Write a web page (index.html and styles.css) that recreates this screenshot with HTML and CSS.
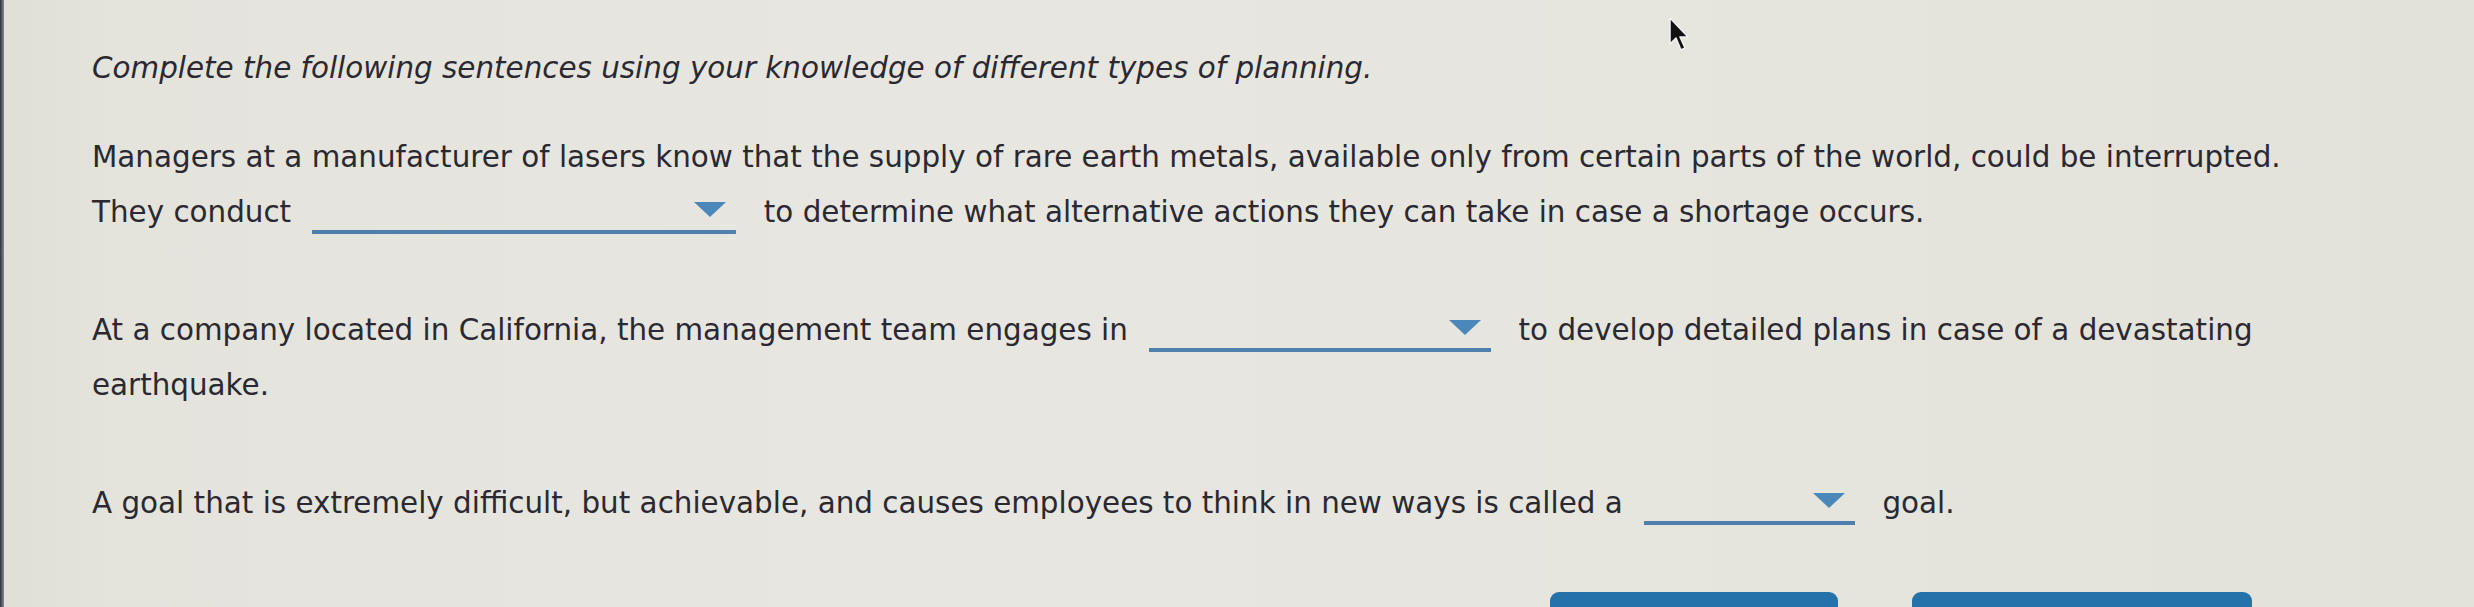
FILE: index.html
```html
<!DOCTYPE html>
<html lang="en">
<head>
<meta charset="utf-8">
<title>Types of planning</title>
<link rel="stylesheet" href="styles.css">
</head>
<body>
<div class="screen">
  <div class="edge"></div>
  <main class="content">
    <p class="prompt">Complete the following sentences using your knowledge of different types of planning.</p>
    <p class="question">Managers at a manufacturer of lasers know that the supply of rare earth metals, available only from certain parts of the world, could be interrupted.<br>They conduct <span class="dd dd-1"><svg class="caret" viewBox="0 0 32 15"><polygon points="0,0 32,0 16,15"/></svg></span> to determine what alternative actions they can take in case a shortage occurs.</p>
    <p class="question">At a company located in California, the management team engages in <span class="dd dd-2"><svg class="caret" viewBox="0 0 32 15"><polygon points="0,0 32,0 16,15"/></svg></span> to develop detailed plans in case of a devastating<br>earthquake.</p>
    <p class="question">A goal that is extremely difficult, but achievable, and causes employees to think in new ways is called a <span class="dd dd-3"><svg class="caret" viewBox="0 0 32 15"><polygon points="0,0 32,0 16,15"/></svg></span> goal.</p>
    <div class="actions">
      <button class="btn btn-prev" type="button"></button>
      <button class="btn btn-next" type="button"></button>
    </div>
  </main>
  <svg class="cursor" viewBox="0 0 22 36"><path d="M2 1 L2 27 L8 21 L13 33 L17 31 L12 20 L20 20 Z" fill="#111" stroke="#f2f2f2" stroke-width="1.5" stroke-linejoin="round"/></svg>
</div>
</body>
</html>
```

FILE: styles.css
```css
html, body {
  margin: 0;
  padding: 0;
}
body {
  width: 2474px;
  height: 607px;
  overflow: hidden;
  font-family: "DejaVu Sans", Verdana, sans-serif;
  color: #2a2932;
}
.screen {
  position: relative;
  display: flex;
  width: 2474px;
  height: 607px;
  overflow: hidden;
  background: linear-gradient(90deg, #dfded7 0px, #e4e3dc 120px, #e7e6e0 900px, #e6e5de 1600px, #e2e1da 2474px);
}
.edge {
  width: 4px;
  flex: none;
  background: linear-gradient(90deg, #2f3140, #8a8b90);
}
.content {
  flex: 1;
  padding: 48px 0 0 88px;
  font-size: 29.4px;
}
.prompt {
  margin: 0;
  font-style: italic;
  line-height: 40px;
}
.question {
  margin: 42px 0 0;
  line-height: 55px;
}
.question + .question {
  margin-top: 63px;
}
.dd {
  display: inline-block;
  position: relative;
  height: 34px;
  overflow: hidden;
  border-bottom: 4px solid #4f80ad;
  vertical-align: -12px;
  margin: 0 18px 0 12px;
}
.dd-1 { width: 424px; }
.dd-2 { width: 342px; }
.dd-3 { width: 211px; }
.caret {
  display: block;
  width: 32px;
  height: 15px;
  margin: 6px 10px 0 auto;
  fill: #4b88b9;
}
.actions {
  display: flex;
  gap: 74px;
  margin: 61px 0 0 1458px;
}
.btn {
  height: 60px;
  border: 0;
  border-radius: 9px;
  background: #2571aa;
  padding: 0;
}
.btn-prev { width: 288px; }
.btn-next { width: 340px; }
.cursor {
  position: absolute;
  left: 1668px;
  top: 17px;
  width: 22px;
  height: 36px;
}
```
